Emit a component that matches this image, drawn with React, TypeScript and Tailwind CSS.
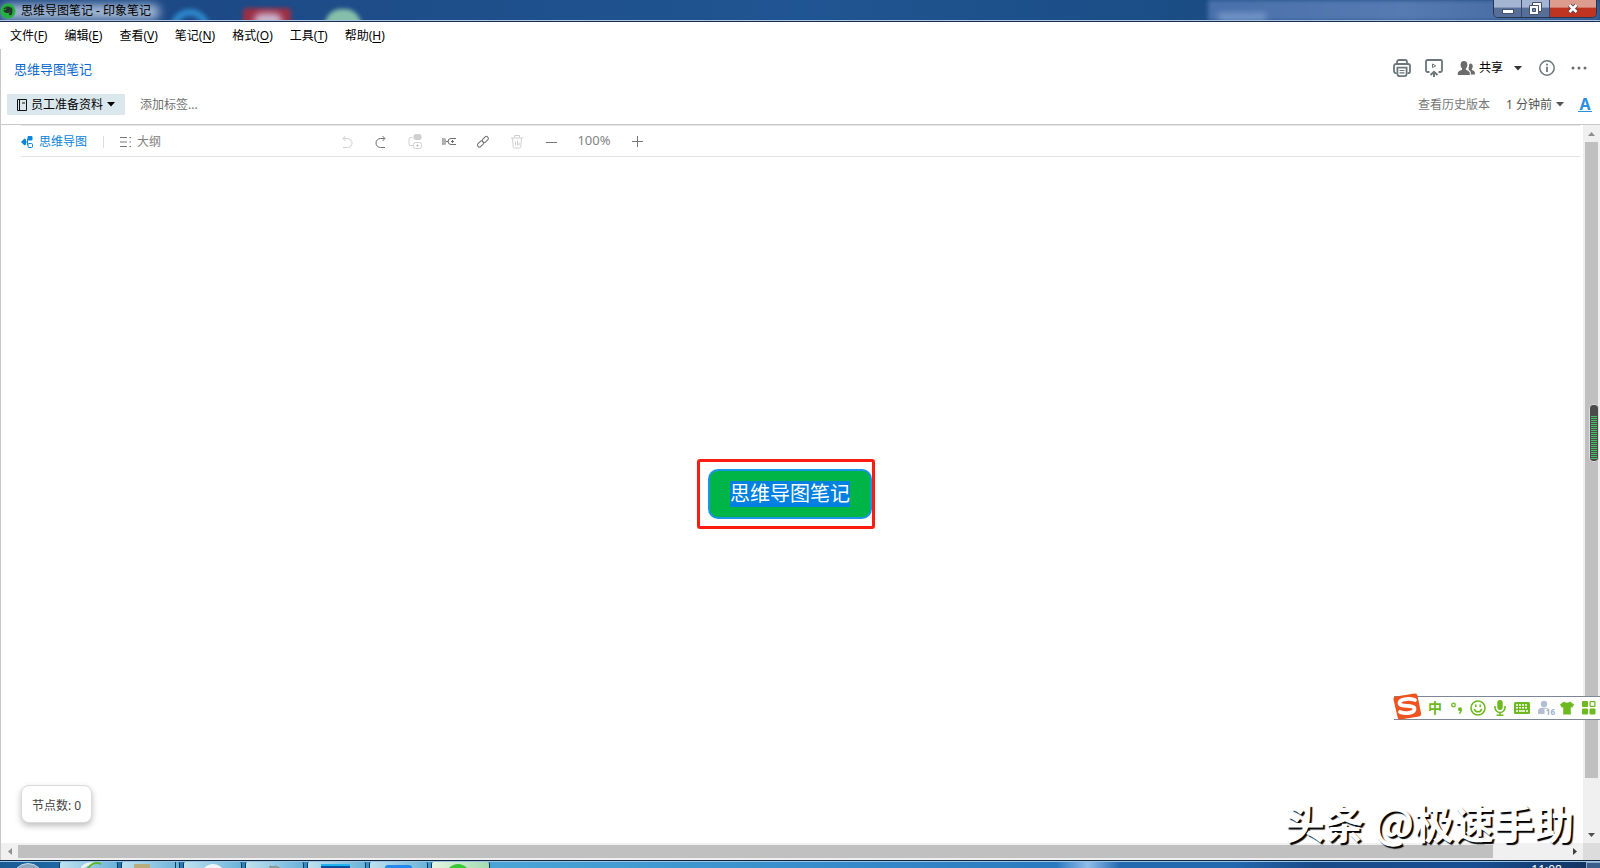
import React, { useState } from 'react';

const menus = [
  { label: '文件', key: 'F' },
  { label: '编辑', key: 'E' },
  { label: '查看', key: 'V' },
  { label: '笔记', key: 'N' },
  { label: '格式', key: 'O' },
  { label: '工具', key: 'T' },
  { label: '帮助', key: 'H' },
];

const Caret = ({ className = '' }: { className?: string }) => (
  <svg width="8" height="5" viewBox="0 0 8 5" className={className}>
    <path d="M0 0h8L4 4.6z" fill="currentColor" />
  </svg>
);

const TitleBar = () => (
  <header className="relative h-[22px] shrink-0 overflow-hidden border-b border-[#1c2f4c] bg-linear-to-r from-[#1c4682] via-[#1f5592] to-[#174477]">
    {/* Blurred desktop behind the glass */}
    <div className="absolute inset-0">
      <span className="absolute left-0 top-1 h-4 w-40 rounded-full bg-[#c3d2e6]/80 blur-[5px]" />
      <span className="absolute left-[170px] top-[9px] h-10 w-10 rounded-full border-[7px] border-[#2c86c9] blur-[2px]" />
      <span className="absolute left-[243px] top-2 h-8 w-12 rounded bg-[#9c2f45] blur-[2px]" />
      <span className="absolute left-[254px] top-[13px] h-4 w-7 rounded-full bg-[#c9b3cb] blur-[3px]" />
      <span className="absolute left-[325px] top-[9px] h-8 w-9 rounded-full bg-[#86bfa9] blur-[2px]" />
      <span className="absolute right-0 top-0 h-full w-[392px] bg-linear-to-r from-[#4a70ab] via-[#567bb2] to-[#3d6299] blur-[2px]" />
      <span className="absolute right-[334px] top-[13px] h-2 w-12 bg-[#86a6d4]/70 blur-[3px]" />
    </div>
    <div className="absolute inset-x-0 bottom-0 h-px bg-[#a9c3e0]" />
    <div className="relative flex items-start justify-between">
      <div className="flex h-[21px] items-center gap-[5px]">
        <svg width="16" height="16" viewBox="0 0 16 16">
          <circle cx="8" cy="8" r="7.500" fill="#22b23c" />
          <path d="M6.200 3.400h2.200c1 .1 1.400.8 2 .9 1.200.2 1.900.5 2 1.600.2 2-.1 4.600-.8 5.800-.5.9-2.700.8-2.800-.4-.1-1 .6-1.200 1.400-1.200v-.5c-1 .1-1.700.6-2.300.5C5.300 10 3.500 9.200 3.400 6.700h2.300c.4 0 .5-.2.5-.6z" fill="#26352c" />
          <path d="M3.300 6 5.600 3.600V6z" fill="#26352c" />
        </svg>
        <h1 className="text-xs text-black">思维导图笔记 - 印象笔记</h1>
      </div>
      <div className="mr-[3px] flex h-[18px] overflow-hidden rounded-b-[5px] border border-t-0 border-[#27364f]">
        <button aria-label="Minimize" className="flex w-7 items-center justify-center border-r border-[#33486b] bg-linear-to-b from-[#a3b5d2] from-40% to-[#566f99] to-50%">
          <svg width="12" height="16" viewBox="0 0 12 16"><rect x=".5" y="8.500" width="11" height="4" fill="#fff" stroke="#45536d" /></svg>
        </button>
        <button aria-label="Restore" className="flex w-7 items-center justify-center border-r border-[#33486b] bg-linear-to-b from-[#a3b5d2] from-40% to-[#566f99] to-50%">
          <svg width="13" height="14" viewBox="0 0 13 14">
            <path d="M3.500.5h9v9h-9z" fill="#fff" stroke="#45536d" />
            <path d="M.5 3.500h9v9h-9z" fill="#fff" stroke="#45536d" />
            <path d="M3.500 6.500h3v3h-3z" fill="#7c8fb0" stroke="#45536d" />
          </svg>
        </button>
        <button aria-label="Close" className="flex w-[46px] items-center justify-center bg-linear-to-b from-[#dc9c8e] from-40% to-[#bf3420] to-50%">
          <svg width="12" height="11" viewBox="0 0 12 11">
            <path d="m2.500 2 7 7m0-7-7 7" stroke="#5b4450" strokeWidth="4.500" />
            <path d="m2.500 2 7 7m0-7-7 7" stroke="#fff" strokeWidth="2.600" />
          </svg>
        </button>
      </div>
    </div>
  </header>
);

const MenuBar = () => (
  <nav className="flex h-[27px] shrink-0 items-center gap-[17px] px-2.5">
    {menus.map((m) => (
      <button key={m.key} className="text-xs text-black">
        {m.label}(<span className="underline underline-offset-2">{m.key}</span>)
      </button>
    ))}
  </nav>
);

const NoteHeader = () => (
  <section className="shrink-0 border-b border-l border-[#c8c8c8]">
    <div className="flex h-[42px] items-center justify-between pl-[13px] pr-[13px]">
      <h2 className="text-[13px] text-[#0b68cf]">思维导图笔记</h2>
      <div className="flex items-center pb-1 text-[#6b777c]">
        <button aria-label="打印" className="mr-3.5">
          <svg width="18" height="18" viewBox="0 0 18 18" fill="none" stroke="currentColor" strokeWidth="1.800">
            <path d="M4 4.500V3a2 2 0 0 1 2-2h6a2 2 0 0 1 2 2v1.500" />
            <path d="M3.500 14.200H3a2 2 0 0 1-2-2V7a2 2 0 0 1 2-2h12a2 2 0 0 1 2 2v5.200a2 2 0 0 1-2 2h-.5" />
            <path d="M4.400 8.600h9.200v6.500a2 2 0 0 1-2 2H6.400a2 2 0 0 1-2-2z" />
            <path d="M6.500 11.500h5M6.500 13.800h5" strokeWidth="1.200" />
          </svg>
        </button>
        <button aria-label="演示" className="mr-3.5">
          <svg width="18" height="18" viewBox="0 0 18 18" fill="none" stroke="currentColor" strokeWidth="1.800">
            <path d="M4.500 13H2.500A1.500 1.500 0 0 1 1 11.500v-9A1.500 1.500 0 0 1 2.500 1h13A1.500 1.500 0 0 1 17 2.500v9a1.500 1.500 0 0 1-1.500 1.500H13.500" />
            <path d="m7.500 5 3.200 1.800-3.200 1.800z" strokeWidth="1" />
            <path d="M9 18v-4.500M5.500 16 9 12.800 12.500 16" strokeWidth="2" />
          </svg>
        </button>
        <button className="flex items-center text-xs text-black">
          <svg width="18" height="16" viewBox="0 0 18 16" fill="#6b6b6b" className="mr-1">
            <path d="M7 1c2.200 0 3.400 1.500 3.400 3.700 0 1.600-.7 2.900-1.500 3.700v1.300c.8.700 3.600 1.200 3.900 3.100V15H.800v-2.200c.3-1.900 3.300-2.400 4.200-3.100V8.400C4.200 7.600 3.600 6.300 3.600 4.700 3.600 2.500 4.800 1 7 1z" />
            <path d="M13.300 3.500c1.600 0 2.500 1.100 2.500 2.800 0 1.200-.4 2.100-1 2.700v1c.6.500 2.900.9 3.100 2.400v2h-4.100v-2c-.3-1.300-1.300-2-2.500-2.600.3-.2.600-.5.7-.8V9c-.2-.3-.4-.6-.5-.9.500-1 .7-2 .6-3.400.300-.8.700-1.200 1.200-1.200z" />
          </svg>
          共享
          <Caret className="ml-[11px] mr-[17px] text-[#333]" />
        </button>
        <button aria-label="笔记信息" className="mr-4">
          <svg width="16" height="16" viewBox="0 0 16 16" fill="none" stroke="currentColor" strokeWidth="1.500">
            <circle cx="8" cy="8" r="7.200" />
            <path d="M8 6.800V12" strokeWidth="1.800" />
            <path d="M8 3.800v1.800" strokeWidth="1.800" />
          </svg>
        </button>
        <button aria-label="更多">
          <svg width="16" height="4" viewBox="0 0 16 4" fill="#6b6b6b">
            <circle cx="2" cy="2" r="1.500" />
            <circle cx="8" cy="2" r="1.500" />
            <circle cx="14" cy="2" r="1.500" />
          </svg>
        </button>
      </div>
    </div>
    <div className="flex h-[33px] items-start justify-between pl-1.5 pr-2">
      <div className="flex h-[29px] items-center pb-0.5">
        <button className="flex h-[21px] items-center bg-[#dae8ee] px-2.5 text-xs text-black">
          <svg width="10" height="12" viewBox="0 0 10 12" fill="none" stroke="#111" className="mr-1">
            <path d="M.5.5h9v11h-9zM2.500.5v11M5 4h3" />
          </svg>
          员工准备资料
          <Caret className="ml-1" />
        </button>
        <input
          aria-label="添加标签"
          placeholder="添加标签..."
          className="ml-[15px] w-40 text-xs outline-none placeholder:text-[#6f6f6f]"
        />
      </div>
      <div className="flex h-[27px] items-center text-xs text-[#555]">
        <a href="#history" className="mr-4 text-[#777]">查看历史版本</a>
        <button className="mr-3.5 flex items-center gap-1">1 分钟前<Caret className="text-[#555]" /></button>
        <button aria-label="格式" className="w-3.5 border-b border-[#2b8fdc] text-base font-bold leading-[14px] text-[#2b8fdc]">A</button>
      </div>
    </div>
  </section>
);

const tools = [
  {
    label: '撤销', off: true,
    icon: <path d="M4 4.500h4.500a4.500 4.500 0 0 1 0 9H4M6.500 2 4 4.500 6.500 7" />,
  },
  {
    label: '重做', off: false,
    icon: <path d="M11.500 4.500H7.500a4.500 4.500 0 0 0 0 9h4.500M9.500 2 12 4.500 9.500 7" />,
  },
  {
    label: '添加同级', off: true,
    icon: (
      <>
        <rect x="6.500" y="0" width="8" height="6" rx="2.500" fill="currentColor" stroke="none" />
        <path d="M5.500 3.500H3.500a1.500 1.500 0 0 0-1.500 1.500v5a1.500 1.500 0 0 0 1.500 1.500h3" />
        <rect x="6.500" y="8.500" width="8" height="6" rx="2" />
        <path d="M10.500 10v3M9 11.500h3" />
      </>
    ),
  },
  {
    label: '添加子级', off: false,
    icon: (
      <>
        <path d="M1 4v7h2.500q1.500 0 1.500-1.500v-4Q5 4 3.500 4z" fill="#b0b0b0" stroke="none" />
        <path d="M5 7.500h2.500M15 4.500H10a3 3 0 0 0 0 6h5M11.500 6v3M10 7.500h3" />
      </>
    ),
  },
  {
    label: '链接', off: false,
    icon: (
      <>
        <rect x="-3.500" y="-2" width="7" height="4" rx="2" transform="translate(5.500 10) rotate(-45)" />
        <rect x="-3.500" y="-2" width="7" height="4" rx="2" transform="translate(10.300 5.500) rotate(-45)" />
      </>
    ),
  },
  {
    label: '删除', off: true,
    icon: <path d="M2 4h12M5.500 3.500v-2h5v2M3.500 4l.7 8.500a1.500 1.500 0 0 0 1.500 1.500h4.600a1.500 1.500 0 0 0 1.500-1.500L12.500 4M6.500 11.500v-4M8.500 11.500v-5M10 11.500v-3" />,
  },
];

const MapToolbar = ({ zoom, setZoom }: { zoom: number; setZoom: (z: number) => void }) => (
  <div className="ml-5 mr-[3px] flex h-8 shrink-0 items-center border-b border-t border-[#e4e4e4] text-xs text-[#828282]">
    <div className="flex w-[309px] items-center pt-px">
      <button className="flex items-center gap-1.5 text-[#0a84dc]">
        <svg width="12" height="12" viewBox="0 0 12 12">
          <path d="M5 3.500v5L3.500 9.500 0 6l3.500-3.500z" fill="currentColor" />
          <path d="M5 6h1.500M6.500 3v6" stroke="currentColor" />
          <rect x="6.500" y="0" width="5" height="4.500" rx="1" fill="currentColor" />
          <rect x="7" y="7.500" width="4.500" height="4" rx="1" fill="#fff" stroke="currentColor" />
        </svg>
        思维导图
      </button>
      <span className="mx-4 h-3 w-px bg-[#ddd]" />
      <button className="flex items-center gap-1.5">
        <svg width="11" height="10" viewBox="0 0 11 10" stroke="#777">
          <path d="M0 .5h7M0 5h7M0 9.500h7" />
          <path d="M9.500.5H11M9.500 5H11M9.500 9.500H11" />
        </svg>
        大纲
      </button>
    </div>
    {tools.map((t) => (
      <button key={t.label} aria-label={t.label} className={`flex w-[34px] shrink-0 justify-center ${t.off ? 'text-[#cfcfcf]' : 'text-[#6e6e6e]'}`}>
        <svg width="16" height="15" viewBox="0 0 16 15" fill="none" stroke="currentColor">{t.icon}</svg>
      </button>
    ))}
    <button aria-label="缩小" onClick={() => setZoom(zoom - 10)} className="flex w-[34px] justify-center">
      <svg width="11" height="11" viewBox="0 0 11 11" stroke="#777"><path d="M0 6.500h11" /></svg>
    </button>
    <span className="w-13 text-center text-[13px]">{zoom}%</span>
    <button aria-label="放大" onClick={() => setZoom(zoom + 10)} className="flex w-[34px] justify-center">
      <svg width="11" height="11" viewBox="0 0 11 11" stroke="#777"><path d="M0 5.500h11M5.500 0v11" /></svg>
    </button>
  </div>
);

const VerticalScroll = () => (
  <div className="flex w-[17px] shrink-0 flex-col bg-[#f0f0f0]">
    <div className="flex h-[17px] items-center justify-center">
      <svg width="7" height="4" viewBox="0 0 7 4"><path d="M0 4h7L3.500 0z" fill="#8f8f8f" /></svg>
    </div>
    <div className="min-h-0 flex-1 px-0.5">
      <div className="h-[93%] bg-[#c0c0c0]" />
    </div>
    <div className="flex h-[17px] items-center justify-center">
      <svg width="7" height="4" viewBox="0 0 7 4"><path d="M0 0h7L3.500 4z" fill="#505050" /></svg>
    </div>
  </div>
);

const HorizontalScroll = () => (
  <div className="flex h-[17px] shrink-0 border-l border-[#c8c8c8] bg-[#f0f0f0]">
    <div className="flex w-[17px] items-center justify-center">
      <svg width="4" height="7" viewBox="0 0 4 7"><path d="M4 0v7L0 3.500z" fill="#8f8f8f" /></svg>
    </div>
    <div className="flex-1 py-0.5">
      <div className="h-full w-[95.300%] bg-[#c0c0c0]" />
    </div>
    <div className="flex w-[17px] items-center justify-center">
      <svg width="4" height="7" viewBox="0 0 4 7"><path d="M0 0v7l4-3.500z" fill="#404040" /></svg>
    </div>
    <div className="w-[17px] bg-[#dcdcdc]" />
  </div>
);

const InputMethodBar = () => (
  <div className="absolute right-0 top-[696px] z-20 flex h-6 items-center border-y border-[#7d8794] bg-white pl-[34px] text-[#6cba1e]">
    <svg width="30" height="28" viewBox="0 0 30 28" className="absolute -left-0.5 -top-1">
      <path d="M4 3.500 22.500.5Q25 .2 25.500 2.500L29 20q.4 3-2 3.500L8.500 26.500Q6 27 5.500 24L1.500 6.500Q1 4 4 3.500z" fill="#ef5322" />
      <path d="M23 7C16 4.800 7.500 6.300 7.500 10c0 4.700 15 1.200 15 6 0 4-9 5.200-14.500 3" fill="none" stroke="#fff" strokeWidth="3.800" strokeLinecap="round" />
    </svg>
    <button className="mr-2 text-sm font-bold leading-[22px]">中</button>
    <button aria-label="标点" className="mr-1.5">
      <svg width="14" height="14" viewBox="0 0 14 14">
        <circle cx="3.500" cy="4" r="1.800" fill="none" stroke="currentColor" strokeWidth="1.300" />
        <path d="M8 8.200a2 2 0 1 1 4 0c0 2.200-.9 3.900-2.700 4.800l-.6-.9c.9-.6 1.300-1.200 1.300-2-1.100 0-2-.8-2-1.900z" fill="currentColor" />
      </svg>
    </button>
    <button aria-label="表情" className="mr-2">
      <svg width="16" height="16" viewBox="0 0 16 16" fill="none" stroke="currentColor" strokeWidth="1.600">
        <circle cx="8" cy="8" r="7" />
        <path d="M4.300 8.800c.8 4 6.600 4 7.400 0M5.800 4.500v2.500M10.200 4.500v2.500" />
      </svg>
    </button>
    <button aria-label="语音" className="mr-2">
      <svg width="12" height="16" viewBox="0 0 12 16" fill="none" stroke="currentColor" strokeWidth="1.600">
        <rect x="3.300" y="0" width="5.400" height="10" rx="2.700" fill="currentColor" stroke="none" />
        <path d="M1 6v1.500a5 5 0 0 0 10 0V6M6 12.500V15M2.500 15.200h7" />
      </svg>
    </button>
    <button aria-label="键盘" className="mr-2">
      <svg width="16" height="12" viewBox="0 0 16 12">
        <rect width="16" height="12" rx="1.500" fill="currentColor" />
        <path d="M2 3h12M2 5.800h12" stroke="#fff" strokeWidth="1.500" strokeDasharray="2 1" />
        <path d="M2 9h2m1 0h6m1 0h2" stroke="#fff" strokeWidth="1.500" />
      </svg>
    </button>
    <button aria-label="账户" className="relative mr-1.5 text-[#b4bfd4]">
      <svg width="16" height="16" viewBox="0 0 16 16" fill="currentColor">
        <circle cx="6" cy="4" r="3.200" />
        <path d="M0 14V11q.5-3.200 4-3.200h4q2 0 3 1H6.500V14z" />
      </svg>
      <span className="absolute -right-px bottom-0 text-[8px] font-bold leading-[8px] text-[#9fafca]">16</span>
    </button>
    <button aria-label="皮肤" className="mr-2">
      <svg width="14" height="14" viewBox="0 0 14 14" fill="currentColor"><path d="M4 .5q3 2.500 6 0l4 3-1.800 3.300-1.400-.8v7.500H3.200V6l-1.400.8L0 3.500z" /></svg>
    </button>
    <button aria-label="工具箱" className="mr-1">
      <svg width="14" height="14" viewBox="0 0 14 14" fill="currentColor">
        <rect width="6" height="6" rx="1" />
        <rect y="7.500" width="6" height="6" rx="1" />
        <rect x="7.500" y="7.500" width="6" height="6" rx="1" />
        <rect x="8.100" y=".6" width="4.800" height="4.800" rx=".5" fill="none" stroke="currentColor" strokeWidth="1.200" />
      </svg>
    </button>
  </div>
);

// Level meter docked on the right edge of the screen
const LevelMeter = () => (
  <svg width="10" height="58" viewBox="0 0 10 58" className="absolute right-px top-[404px] z-10">
    <rect x=".5" y=".5" width="9" height="57" rx="3.500" fill="#4a4a4a" stroke="#dcdcdc" />
    <path d="M5 12v44" stroke="#45c268" strokeWidth="6" strokeDasharray="1 1" />
  </svg>
);

const TaskButton = ({ active, children }: { active?: boolean; children: React.ReactNode }) => (
  <button className={`h-1.5 w-[59px] overflow-hidden rounded-t-xs border-x border-[#123a5e] ${active ? 'bg-linear-to-r from-[#e3f5df] to-[#a4dbb0]' : 'bg-linear-to-r from-[#bfe1ee] to-[#69b3da]'}`}>
    <svg width="57" height="6" viewBox="0 0 57 6">{children}</svg>
  </button>
);

const Taskbar = () => (
  <footer className="h-2 shrink-0 overflow-hidden border-t border-[#10233c] bg-[linear-gradient(90deg,#1b5a92_0%,#1d6aa5_4%,#4aa5d6_31%,#3a90cc_48%,#2a79bf_66%,#90bdea_68%,#2369b0_70%,#2369b0_77%,#194b88_82%,#174f93_92%,#12305c_100%)]">
    <div className="flex justify-between border-t border-[#9cc6e6]">
      <div className="flex gap-[3px]">
        <div className="flex w-14 justify-center">
          <svg width="32" height="6" viewBox="0 0 32 6"><circle cx="16" cy="17" r="15.500" fill="#8ea8bf" stroke="#c9dbe8" /></svg>
        </div>
        <TaskButton><path d="M22 6q4-5 12-4" stroke="#e8f4ef" strokeWidth="3" fill="none" /><path d="M28 6q6-7 13-4" stroke="#5cb82f" strokeWidth="2" fill="none" /></TaskButton>
        <TaskButton><rect x="12" y="2" width="16" height="5" rx="1" fill="#b9ad7e" /><path d="M53.500 0v6" stroke="#123a5e" /></TaskButton>
        <TaskButton><circle cx="29" cy="14" r="12" fill="#eef6fa" /></TaskButton>
        <TaskButton><path d="M24 6V4l3 1 3-1 5 3" stroke="#7c8f8d" fill="#99a59d" /></TaskButton>
        <TaskButton><rect x="13" y="2" width="29" height="2" fill="#1fb4ef" /><rect x="13" y="4" width="29" height="3" fill="#06509c" /></TaskButton>
        <TaskButton><rect x="15" y="3" width="27" height="8" rx="3" fill="#2688ec" /></TaskButton>
        <TaskButton active><circle cx="26" cy="14" r="12" fill="#35ca36" /></TaskButton>
      </div>
      <div className="flex gap-6">
        <time className="h-1.5 overflow-hidden text-xs leading-4 text-white">11:08</time>
        <span className="w-3.5 border-l border-t border-[#8fa6c4] bg-[#3b5d8a]" />
      </div>
    </div>
  </footer>
);

export default function App() {
  const [zoom, setZoom] = useState(100);

  return (
    <div className="relative flex h-screen flex-col overflow-hidden bg-white font-['Noto_Sans','Noto_Sans_CJK_SC',sans-serif]">
      <TitleBar />
      <MenuBar />
      <NoteHeader />

      <main className="flex min-h-0 flex-1 border-l border-[#c8c8c8]">
        <div className="flex min-w-0 flex-1 flex-col">
          <MapToolbar zoom={zoom} setZoom={setZoom} />
          {/* Canvas */}
          <div className="relative flex flex-1 items-center justify-center pb-3 pr-3">
            <div className="rounded-[3px] border-3 border-[#fb1d12] py-[7px] pl-2 pr-0">
              <div className="rounded-[10px] border-2 border-[#1795e8] bg-[#00b548] px-5 py-2.5">
                <span className="block bg-[#0080e0] text-xl leading-[26px] text-white">思维导图笔记</span>
              </div>
            </div>
            <div className="absolute bottom-5 left-5 rounded-lg border border-[#dadada] bg-white px-2.5 pb-2 pt-3 text-xs text-[#444] shadow-[0_3px_6px_rgba(0,0,0,0.25)]">
              节点数: 0
            </div>
          </div>
        </div>
        <VerticalScroll />
      </main>
      <HorizontalScroll />
      <Taskbar />

      <LevelMeter />
      <InputMethodBar />
      <p className="pointer-events-none absolute bottom-[26px] right-[26px] z-20 font-['Noto_Sans_CJK_SC',sans-serif] text-[40px] font-bold leading-10 text-white [text-shadow:2px_2px_1px_#000]">
        头条 @极速手助
      </p>
    </div>
  );
}
